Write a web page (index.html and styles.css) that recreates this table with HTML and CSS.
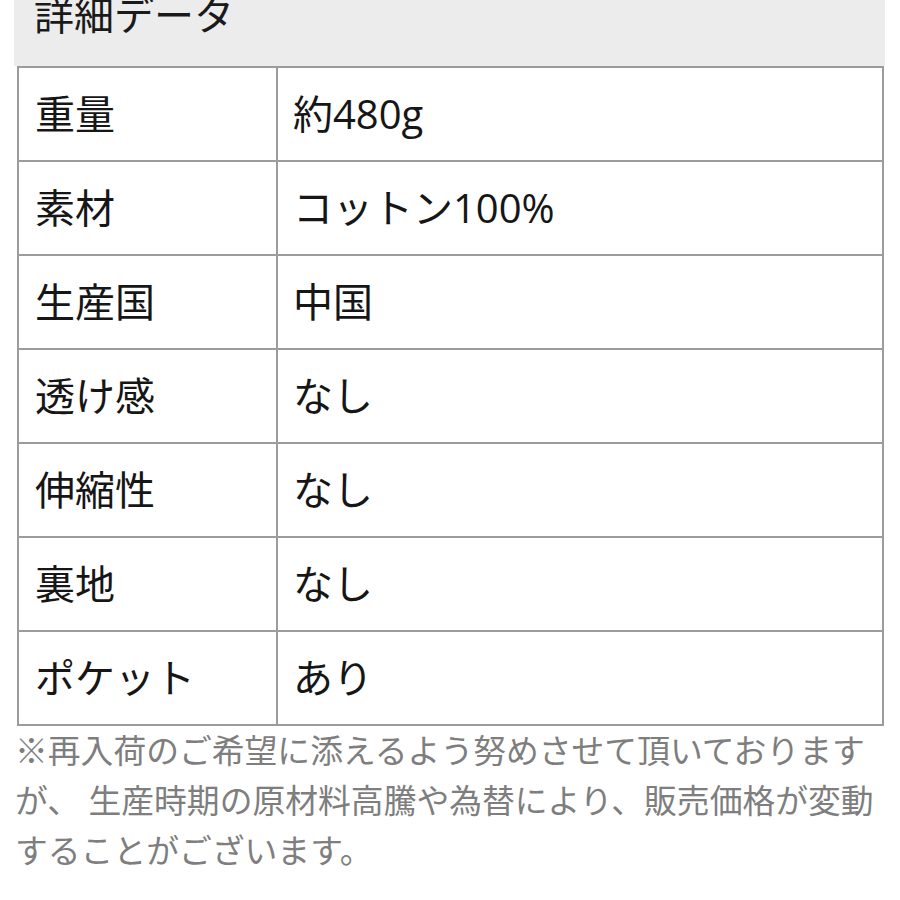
FILE: index.html
```html
<!DOCTYPE html>
<html lang="ja">
<head>
<meta charset="utf-8">
<title>詳細データ</title>
<link rel="stylesheet" href="styles.css">
</head>
<body>
<div class="wrap">
  <div class="head"><h2 class="head-title">詳細データ</h2></div>
  <table class="spec">
    <tr><td class="k">重量</td><td class="v">約480g</td></tr>
    <tr><td class="k">素材</td><td class="v">コットン100%</td></tr>
    <tr><td class="k">生産国</td><td class="v">中国</td></tr>
    <tr><td class="k">透け感</td><td class="v">なし</td></tr>
    <tr><td class="k">伸縮性</td><td class="v">なし</td></tr>
    <tr><td class="k">裏地</td><td class="v">なし</td></tr>
    <tr><td class="k">ポケット</td><td class="v">あり</td></tr>
  </table>
  <p class="note">※再入荷のご希望に添えるよう努めさせて頂いておりますが、 生産時期の原材料高騰や為替により、販売価格が変動することがございます。</p>
</div>
</body>
</html>
```

FILE: styles.css
```css
html, body {
  margin: 0;
  padding: 0;
  background: #ffffff;
}
body {
  font-family: "Open Sans", "Noto Sans CJK JP", "Noto Sans", sans-serif;
  color: #161616;
}
.wrap {
  margin-left: 14px;
  width: 871px;
}
.head {
  height: 66px;
  background: #ececec;
  padding-left: 20px;
  overflow: hidden;
}
.head-title {
  margin: -5px 0 0 0;
  font-size: 40px;
  line-height: 40px;
  font-weight: normal;
  color: #1a1a1a;
}
.spec {
  margin-left: 3px;
  width: 867px;
  border-collapse: separate;
  border-spacing: 0;
  border-top: 2px solid #9c9c9c;
  border-left: 2px solid #9c9c9c;
  table-layout: fixed;
}
.spec td {
  height: 94px;
  padding: 0;
  border-right: 2px solid #9c9c9c;
  border-bottom: 2px solid #9c9c9c;
  font-size: 40px;
  line-height: 48px;
  vertical-align: middle;
  box-sizing: border-box;
}
.spec td.k {
  width: 259px;
  padding-left: 16px;
}
.spec td.v {
  padding-left: 15px;
}
.note {
  margin: 0;
  font-size: 32.8px;
  line-height: 50px;
  color: #7e7e7e;
  padding-left: 1px;
}
```
